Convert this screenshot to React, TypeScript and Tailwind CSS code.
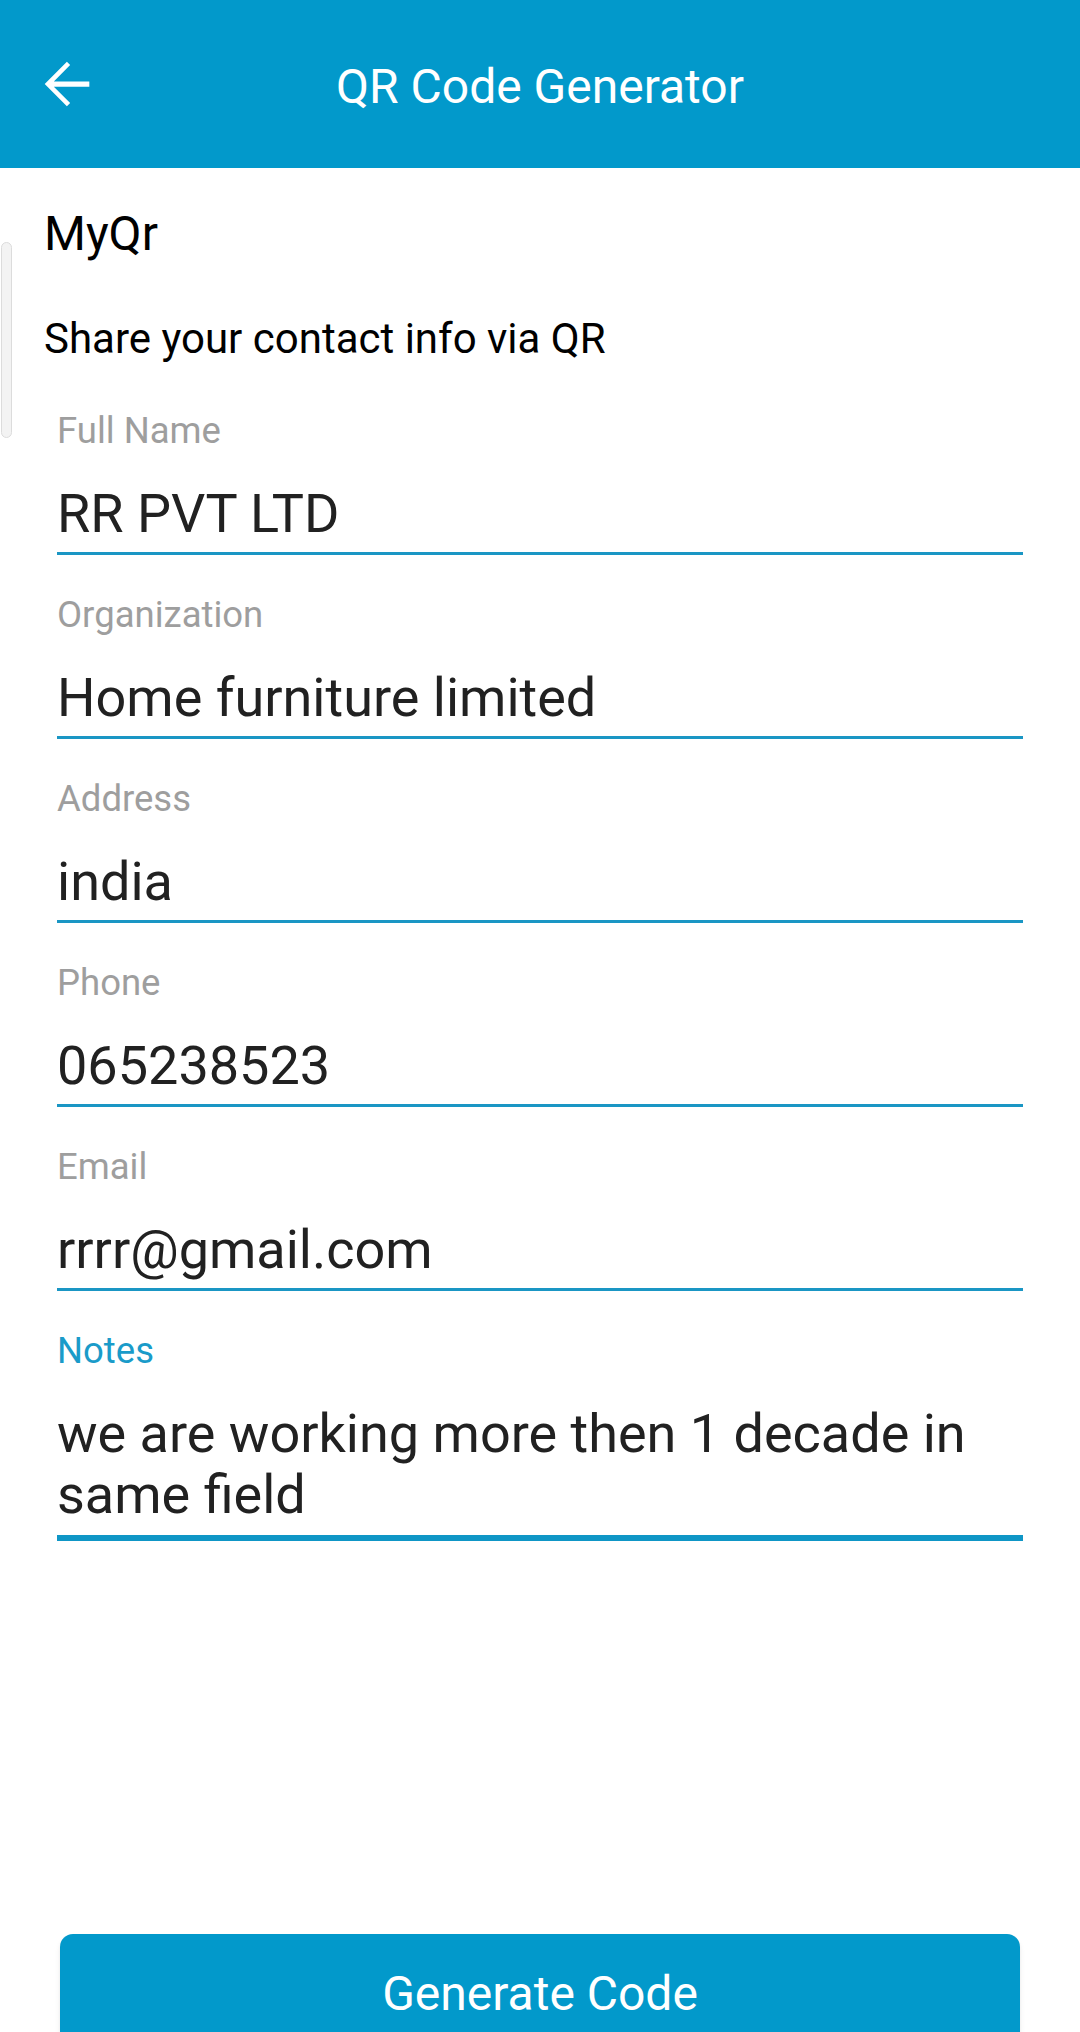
import React from "react"

const fields = [
    { label: "Full Name", value: "RR PVT LTD" },
    { label: "Organization", value: "Home furniture limited" },
    { label: "Address", value: "india" },
    { label: "Phone", value: "065238523" },
    { label: "Email", value: "rrrr@gmail.com" },
]

export default function App() {
    return (
        <div
            className="relative w-[1080px] h-[2032px] overflow-hidden bg-white flex flex-col"
            style={{ fontFamily: "Roboto, 'Noto Sans', sans-serif" }}
        >
            <Header />

            {/* scroll indicator */}
            <div className="absolute left-[1px] top-[242px] w-[11px] h-[196px] rounded-full bg-[#f3f3f3] border border-[#dcdcdc]"></div>

            <div className="px-[44px] pt-[38px] flex flex-col">
                <div className="text-[48px] leading-[56px] text-black">MyQr</div>
                <div className="mt-[52px] text-[42px] leading-[50px] text-black">
                    Share your contact info via QR
                </div>

                <div className="mx-[13px] mt-[46px] flex flex-col">
                    {fields.map((f) => (
                        <Field key={f.label} label={f.label} value={f.value} />
                    ))}
                    <NotesField />
                </div>
            </div>

            <div className="mx-[60px] mt-[393px] h-[120px] shrink-0 rounded-[13px] bg-[#0299cb] shadow-md flex justify-center pt-[32px]">
                <span className="text-[48px] leading-[56px] text-white">Generate Code</span>
            </div>
        </div>
    )
}

function Header() {
    return (
        <div className="relative h-[168px] shrink-0 bg-[#0299cb] flex items-start justify-center">
            <svg
                className="absolute left-[31px] top-[49px]"
                width="70"
                height="70"
                viewBox="0 0 24 24"
                fill="white"
            >
                <path d="M20 11.1H7.83l5.59-5.59L12.3 4.4 4.7 12l7.6 7.6 1.12-1.11L7.83 12.9H20z" />
            </svg>
            <span className="mt-[59px] text-[48px] leading-[56px] text-white">QR Code Generator</span>
        </div>
    )
}

function Field({ label, value }: { label: string; value: string }) {
    return (
        <div className="flex flex-col pb-[39px]">
            <div className="text-[36.5px] leading-[42px] text-[#9e9e9e]">{label}</div>
            <div className="mt-[31px] text-[54px] leading-[61px] text-[#212121] whitespace-nowrap">{value}</div>
            <div className="mt-[8px] h-[3px] bg-[#1a96c4]"></div>
        </div>
    )
}

function NotesField() {
    return (
        <div className="flex flex-col">
            <div className="text-[36.5px] leading-[42px] text-[#1a9bc9]">Notes</div>
            <div className="mt-[31px] text-[54px] leading-[61px] text-[#212121]">
                we are working more then 1 decade in same field
            </div>
            <div className="mt-[10px] h-[6px] bg-[#0f96c6]"></div>
        </div>
    )
}
